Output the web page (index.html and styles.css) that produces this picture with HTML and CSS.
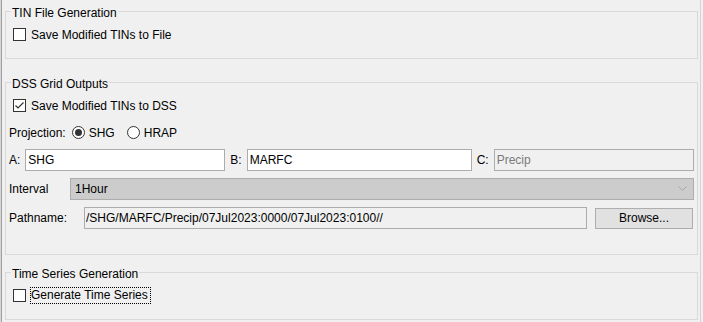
FILE: index.html
```html
<!DOCTYPE html>
<html lang="en">
<head>
    <title>Grid Output Options</title>
    <link rel="stylesheet" href="styles.css">
</head>
<body>
    <div class="panel">
        <div class="group group-short">
            <div class="group-title">TIN File Generation</div>
            <label class="check-row">
                <span class="check"></span>
                <span>Save Modified TINs to File</span>
            </label>
        </div>

        <div class="group group-dss">
            <div class="group-title">DSS Grid Outputs</div>
            <label class="check-row">
                <span class="check">
                    <svg width="11" height="11" viewBox="0 0 11 11"><polyline points="1.5,5.5 4,8 9.5,2.5" fill="none" stroke="#333" stroke-width="1.2"/></svg>
                </span>
                <span>Save Modified TINs to DSS</span>
            </label>

            <div class="row row-projection">
                <span class="label">Projection:</span>
                <label class="radio-item"><span class="radio selected"></span>SHG</label>
                <label class="radio-item"><span class="radio"></span>HRAP</label>
            </div>

            <div class="row row-fields">
                <span class="label">A:</span>
                <input class="field field-a" type="text" value="SHG">
                <span class="label">B:</span>
                <input class="field field-b" type="text" value="MARFC">
                <span class="label">C:</span>
                <input class="field field-c" type="text" value="Precip" disabled>
            </div>

            <div class="row row-field">
                <span class="label label-interval">Interval</span>
                <div class="combo">
                    <span>1Hour</span>
                    <svg width="9" height="5" viewBox="0 0 9 5"><polyline points="0.5,0.5 4.5,4.5 8.5,0.5" fill="none" stroke="#a8a8a8" stroke-width="1"/></svg>
                </div>
            </div>

            <div class="row row-field">
                <span class="label label-path">Pathname:</span>
                <input class="field field-path" type="text" value="/SHG/MARFC/Precip/07Jul2023:0000/07Jul2023:0100//" readonly>
                <button class="btn">Browse...</button>
            </div>
        </div>

        <div class="group group-short group-ts">
            <div class="group-title">Time Series Generation</div>
            <label class="check-row">
                <span class="check"></span>
                <span class="focused">Generate Time Series</span>
            </label>
        </div>
    </div>
</body>
</html>
```

FILE: styles.css
```css
body {
    margin: 0;
    background: #f0f0f0;
    font-family: 'Liberation Sans', Arial, sans-serif;
    font-size: 12px;
    color: #000;
    border-left: 1px solid #d6d6d6;
    width: 702px;
    height: 322px;
    overflow: hidden;
}
.panel {
    width: 700px;
    height: 322px;
    box-sizing: border-box;
    padding-top: 11px;
    border-left: 1px solid #a0a0a0;
    border-right: 1px solid #d4d4d4;
}
.group {
    margin: 0 2px 0 3px;
    border: 1px solid #d9d9d9;
    padding: 0 3px;
    line-height: 14px;
}
.group-short {
    padding-bottom: 15px;
}
.group-dss {
    margin-top: 23px;
    padding-bottom: 25px;
}
.group-ts {
    margin-top: 17px;
}
.group-title {
    width: fit-content;
    margin: -6px 0 0 2px;
    padding: 0 1px;
    background: #f0f0f0;
    line-height: 14px;
}
.check-row {
    display: flex;
    align-items: center;
    height: 17px;
    margin-top: 6px;
    padding-left: 4px;
    gap: 5px;
}
.check {
    width: 13px;
    height: 13px;
    box-sizing: border-box;
    border: 1px solid #333;
    background: #fff;
    display: flex;
    align-items: center;
    justify-content: center;
}
.focused {
    margin-left: -1px;
    border: 1px dotted #000;
    padding: 0 2px 0 0;
    line-height: 15px;
}
.row {
    display: flex;
    align-items: center;
}
.row-projection {
    height: 17px;
    margin-top: 10px;
}
.row-projection .label {
    margin-right: 6px;
}
.radio-item {
    display: flex;
    align-items: center;
    gap: 4px;
    margin-right: 12px;
}
.radio {
    width: 13px;
    height: 13px;
    box-sizing: border-box;
    border: 1px solid #333;
    border-radius: 50%;
    background: #fff;
    display: flex;
    align-items: center;
    justify-content: center;
}
.radio.selected::after {
    content: '';
    width: 7px;
    height: 7px;
    border-radius: 50%;
    background: #333;
}
.row-fields {
    height: 22px;
    margin-top: 8px;
    gap: 5px;
}
.row-field {
    height: 22px;
    margin-top: 7px;
}
.field {
    height: 22px;
    box-sizing: border-box;
    border: 1px solid #acacac;
    background: #fff;
    padding: 0 2px;
    margin: 0;
    font-family: inherit;
    font-size: 12px;
    color: #000;
    outline: none;
}
.field-a { width: 200px; }
.field-b { width: 225px; }
.field-c {
    flex: 1;
    min-width: 0;
    background: #f0f0f0;
    color: #7a7a7a;
}
.field-path {
    flex: 1;
    min-width: 0;
    background: #f0f0f0;
    padding-left: 1px;
}
.label-interval { width: 61px; flex-shrink: 0; }
.label-path { width: 75px; flex-shrink: 0; }
.combo {
    flex: 1;
    height: 22px;
    box-sizing: border-box;
    border: 1px solid #adadad;
    background: #cccccc;
    display: flex;
    align-items: center;
    justify-content: space-between;
    padding: 0 6px 1px 4px;
}
.btn {
    width: 98px;
    height: 21px;
    margin: 0 1px 0 8px;
    border: 1px solid #adadad;
    background: #e1e1e1;
    font-family: inherit;
    font-size: 12px;
    color: #000;
    padding: 0;
}
```
